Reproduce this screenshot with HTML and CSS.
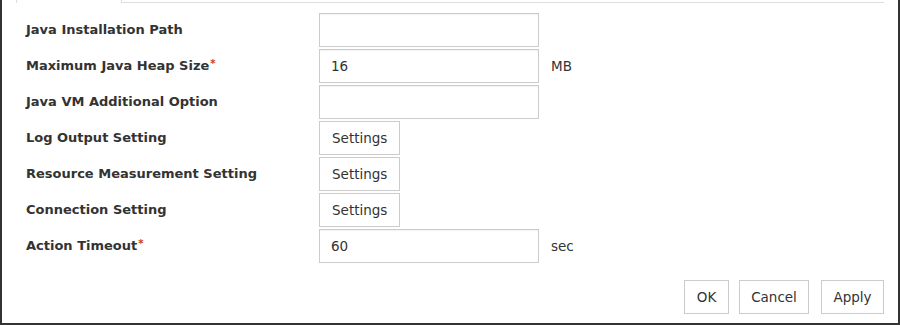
FILE: index.html
```html
<!DOCTYPE html>
<html lang="en">
<head>
<meta charset="utf-8">
<title>Java Settings</title>
<link rel="stylesheet" href="styles.css">
</head>
<body>
<div class="panel">
  <div class="tabs">
    <div class="tab"></div>
    <div class="tab-rest"></div>
  </div>
  <div class="form">
    <div class="label">Java Installation Path</div>
    <div class="ctrl"><input class="field" type="text" value=""></div>

    <div class="label">Maximum Java Heap Size<span class="req">*</span></div>
    <div class="ctrl"><input class="field" type="text" value="16"><span class="unit">MB</span></div>

    <div class="label">Java VM Additional Option</div>
    <div class="ctrl"><input class="field" type="text" value=""></div>

    <div class="label">Log Output Setting</div>
    <div class="ctrl"><button class="btn">Settings</button></div>

    <div class="label">Resource Measurement Setting</div>
    <div class="ctrl"><button class="btn">Settings</button></div>

    <div class="label">Connection Setting</div>
    <div class="ctrl"><button class="btn">Settings</button></div>

    <div class="label">Action Timeout<span class="req">*</span></div>
    <div class="ctrl"><input class="field" type="text" value="60"><span class="unit">sec</span></div>
  </div>
  <div class="actions">
    <button class="btn btn-ok">OK</button>
    <button class="btn btn-cancel">Cancel</button>
    <button class="btn btn-apply">Apply</button>
  </div>
</div>
</body>
</html>
```

FILE: styles.css
```css
html, body {
  margin: 0;
  padding: 0;
  background: #fff;
}

body {
  font-family: "DejaVu Sans", Verdana, sans-serif;
  font-size: 13.5px;
  color: #333;
}

.panel {
  box-sizing: border-box;
  width: 900px;
  height: 325px;
  border-left: 2px solid #333;
  border-right: 2px solid #333;
  border-bottom: 2px solid #333;
  display: flex;
  flex-direction: column;
}

.tabs {
  display: flex;
  height: 3px;
  padding: 0 14px;
}

.tab {
  box-sizing: border-box;
  width: 106px;
  height: 3px;
  border-left: 1px solid #ddd;
  border-right: 1px solid #ddd;
  background: #fff;
}

.tab-rest {
  flex: 1;
  box-sizing: border-box;
  height: 3px;
  border-bottom: 1px solid #ddd;
}

.form {
  display: grid;
  grid-template-columns: 293px 1fr;
  grid-auto-rows: 36px;
  padding: 9px 0 0 24px;
}

.label {
  display: flex;
  align-items: center;
  font-size: 13px;
  font-weight: bold;
  color: #333;
  white-space: nowrap;
  padding-bottom: 1px;
}

.req {
  color: #d0342c;
  font-size: 10px;
  align-self: flex-start;
  margin-top: 10px;
  margin-left: 1px;
}

.ctrl {
  display: flex;
  align-items: center;
}

.field {
  box-sizing: border-box;
  width: 220px;
  height: 34px;
  margin: 0;
  padding: 0 11px;
  border: 1px solid #ccc;
  box-shadow: inset 0 1px 1px rgba(0, 0, 0, 0.06);
  background: #fff;
  font-family: inherit;
  font-size: 13.5px;
  color: #333;
  outline: none;
}

.unit {
  margin-left: 12px;
  color: #333;
}

.btn {
  box-sizing: border-box;
  height: 34px;
  margin: 0;
  padding: 0 12px;
  border: 1px solid #ccc;
  background: #fff;
  font-family: inherit;
  font-size: 13.5px;
  color: #333;
  cursor: pointer;
}

.actions {
  display: flex;
  justify-content: flex-end;
  gap: 10px;
  margin-top: 16px;
  padding-right: 14px;
}

.btn-ok {
  width: 45px;
  padding: 0;
}

.btn-cancel {
  width: 70px;
  padding: 0;
}

.btn-apply {
  width: 63px;
  padding: 0;
  margin-left: 2px;
}
```
